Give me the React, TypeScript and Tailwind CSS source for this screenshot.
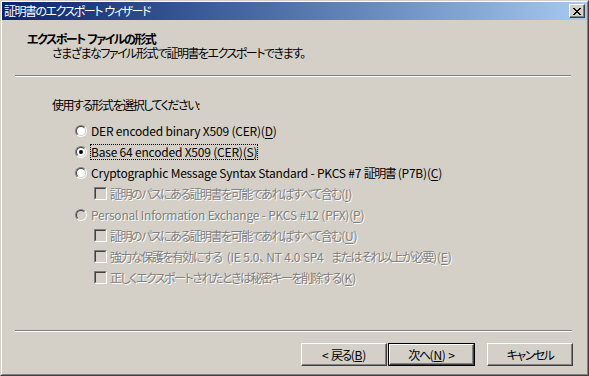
import React from "react";

const FONT = {
  fontFamily: '"Noto Sans CJK JP", "MS UI Gothic", sans-serif',
};

// Japanese runs are set a little tighter, like the narrow kana of the system UI font
function J({ text }: { text: string }) {
  const parts = text.split(/([\u3000-\u30ff\u4e00-\u9fff\uff00-\uffef]+)/);
  return (
    <>
      {parts.map((p, i) =>
        i % 2 === 1 ? (
          <span key={i} className="tracking-[-1.5px]">
            {p}
          </span>
        ) : (
          <React.Fragment key={i}>{p}</React.Fragment>
        )
      )}
    </>
  );
}

function Radio({ checked = false, disabled = false }: { checked?: boolean; disabled?: boolean }) {
  return (
    <div className="w-[12px] h-[12px] shrink-0 rounded-full border border-t-[#808080] border-l-[#808080] border-r-white border-b-white">
      <div
        className={`w-full h-full rounded-full border border-t-[#404040] border-l-[#404040] border-r-[#D4D0C8] border-b-[#D4D0C8] flex items-center justify-center ${
          disabled ? "bg-[#D4D0C8]" : "bg-white"
        }`}
      >
        {checked && <div className="w-[4px] h-[4px] rounded-full bg-black" />}
      </div>
    </div>
  );
}

function Checkbox({ disabled = false }: { disabled?: boolean }) {
  return (
    <div className="w-[13px] h-[13px] shrink-0 border border-t-[#808080] border-l-[#808080] border-r-white border-b-white">
      <div
        className={`w-full h-full border border-t-[#404040] border-l-[#404040] border-r-[#D4D0C8] border-b-[#D4D0C8] ${
          disabled ? "bg-[#D4D0C8]" : "bg-white"
        }`}
      />
    </div>
  );
}

function Label({ text, mnemonic, disabled = false }: { text: string; mnemonic: string; disabled?: boolean }) {
  return (
    <span className={disabled ? "text-[#808080] [text-shadow:1px_1px_0_#fff]" : "text-black"}>
      <J text={text} />(<span className="underline underline-offset-[2px]">{mnemonic}</span>)
    </span>
  );
}

interface OptionRow {
  kind: "radio" | "check";
  text: string;
  mnemonic: string;
  checked?: boolean;
  disabled?: boolean;
  focused?: boolean;
}

const rows: OptionRow[] = [
  { kind: "radio", text: "DER encoded binary X509 (CER)", mnemonic: "D" },
  { kind: "radio", text: "Base 64 encoded X509 (CER)", mnemonic: "S", checked: true, focused: true },
  { kind: "radio", text: "Cryptographic Message Syntax Standard - PKCS #7 証明書 (P7B)", mnemonic: "C" },
  { kind: "check", text: "証明のパスにある証明書を可能であればすべて含む", mnemonic: "I", disabled: true },
  { kind: "radio", text: "Personal Information Exchange - PKCS #12 (PFX)", mnemonic: "P", disabled: true },
  { kind: "check", text: "証明のパスにある証明書を可能であればすべて含む", mnemonic: "U", disabled: true },
  { kind: "check", text: "強力な保護を有効にする  (IE 5.0、 NT 4.0 SP4   またはそれ以上が必要)", mnemonic: "E", disabled: true },
  { kind: "check", text: "正しくエクスポートされたときは秘密キーを削除する", mnemonic: "K", disabled: true },
];

function Button({ children, isDefault = false }: { children: React.ReactNode; isDefault?: boolean }) {
  const inner = (
    <div className="w-full h-full border border-t-white border-l-white border-r-[#404040] border-b-[#404040] bg-[#D4D0C8] shadow-[inset_-1px_-1px_0_#808080] flex items-center justify-center text-[12px] text-black">
      {children}
    </div>
  );
  if (isDefault) {
    return <div className="w-[87px] h-[23px] border border-black">{inner}</div>;
  }
  return <div className="w-[86px] h-[23px]">{inner}</div>;
}

export default function App() {
  return (
    <div
      style={FONT}
      className="w-[589px] h-[376px] bg-[#D4D0C8] border border-t-[#D4D0C8] border-l-[#D4D0C8] border-r-[#404040] border-b-[#404040] text-[12px] leading-[14px] [font-feature-settings:'palt'] tracking-[-0.2px]"
    >
      <div className="h-full border border-t-white border-l-white border-r-[#808080] border-b-[#808080] flex flex-col">
        {/* title bar */}
        <div className="h-[18px] shrink-0 flex items-center justify-between bg-gradient-to-r from-[#0A246A] to-[#A6CAF0] pl-[2px] pr-[2px]">
          <span className="text-white text-[12px] leading-[18px]">
            <J text="証明書のエクスポート ウィザード" />
          </span>
          <div className="w-[16px] h-[14px] border border-t-white border-l-white border-r-[#404040] border-b-[#404040] bg-[#D4D0C8] shadow-[inset_-1px_-1px_0_#808080] flex items-center justify-center">
            <svg width="8" height="7" viewBox="0 0 8 7" shapeRendering="crispEdges">
              <path d="M0 0h2v1h-2zM6 0h2v1h-2zM1 1h2v1h-2zM5 1h2v1h-2zM2 2h4v1h-4zM3 3h2v1h-2zM2 4h4v1h-4zM1 5h2v1h-2zM5 5h2v1h-2zM0 6h2v1h-2zM6 6h2v1h-2z" fill="#000" />
            </svg>
          </div>
        </div>

        {/* header */}
        <div className="h-[55px] shrink-0 pt-[12px]">
          <div className="pl-[25px] font-bold text-black leading-[13px]">
            <J text="エクスポート ファイルの形式" />
          </div>
          <div className="pl-[50px] text-black leading-[13px] mt-[1px]">
            <J text="さまざまなファイル形式で証明書をエクスポートできます。" />
          </div>
        </div>
        <div className="ml-[13px] w-[556px] h-[2px] shrink-0 border-t border-t-[#808080] border-b border-b-white" />

        {/* body */}
        <div className="flex-1 flex flex-col">
          <div className="mt-[21px] pl-[50px] text-black">
            <J text="使用する形式を選択してください:" />
          </div>
          <div className="mt-[8px] flex flex-col">
            {rows.map((r, i) => (
              <div
                key={i}
                className={`h-[21px] flex items-center whitespace-pre ${r.kind === "radio" ? "pl-[73px] gap-[4px]" : "pl-[92px] gap-[3px]"}`}
              >
                {r.kind === "radio" ? <Radio checked={r.checked} disabled={r.disabled} /> : <Checkbox disabled={r.disabled} />}
                {r.focused ? (
                  <span className="-ml-[1px] border border-dotted border-black">
                    <Label text={r.text} mnemonic={r.mnemonic} disabled={r.disabled} />
                  </span>
                ) : (
                  <Label text={r.text} mnemonic={r.mnemonic} disabled={r.disabled} />
                )}
              </div>
            ))}
          </div>
        </div>

        {/* footer */}
        <div className="ml-[13px] w-[557px] h-[2px] shrink-0 border-t border-t-[#808080] border-b border-b-white" />
        <div className="shrink-0 pt-[11px] pb-[8px] flex justify-end pr-[14px]">
          <Button>
            <span>
              &lt; <J text="戻る" />(<span className="underline">B</span>)
            </span>
          </Button>
          <div className="ml-[1px]">
            <Button isDefault>
              <span>
                <J text="次へ" />(<span className="underline">N</span>) &gt;
              </span>
            </Button>
          </div>
          <div className="ml-[12px]">
            <Button>
              <J text="キャンセル" />
            </Button>
          </div>
        </div>
      </div>
    </div>
  );
}
